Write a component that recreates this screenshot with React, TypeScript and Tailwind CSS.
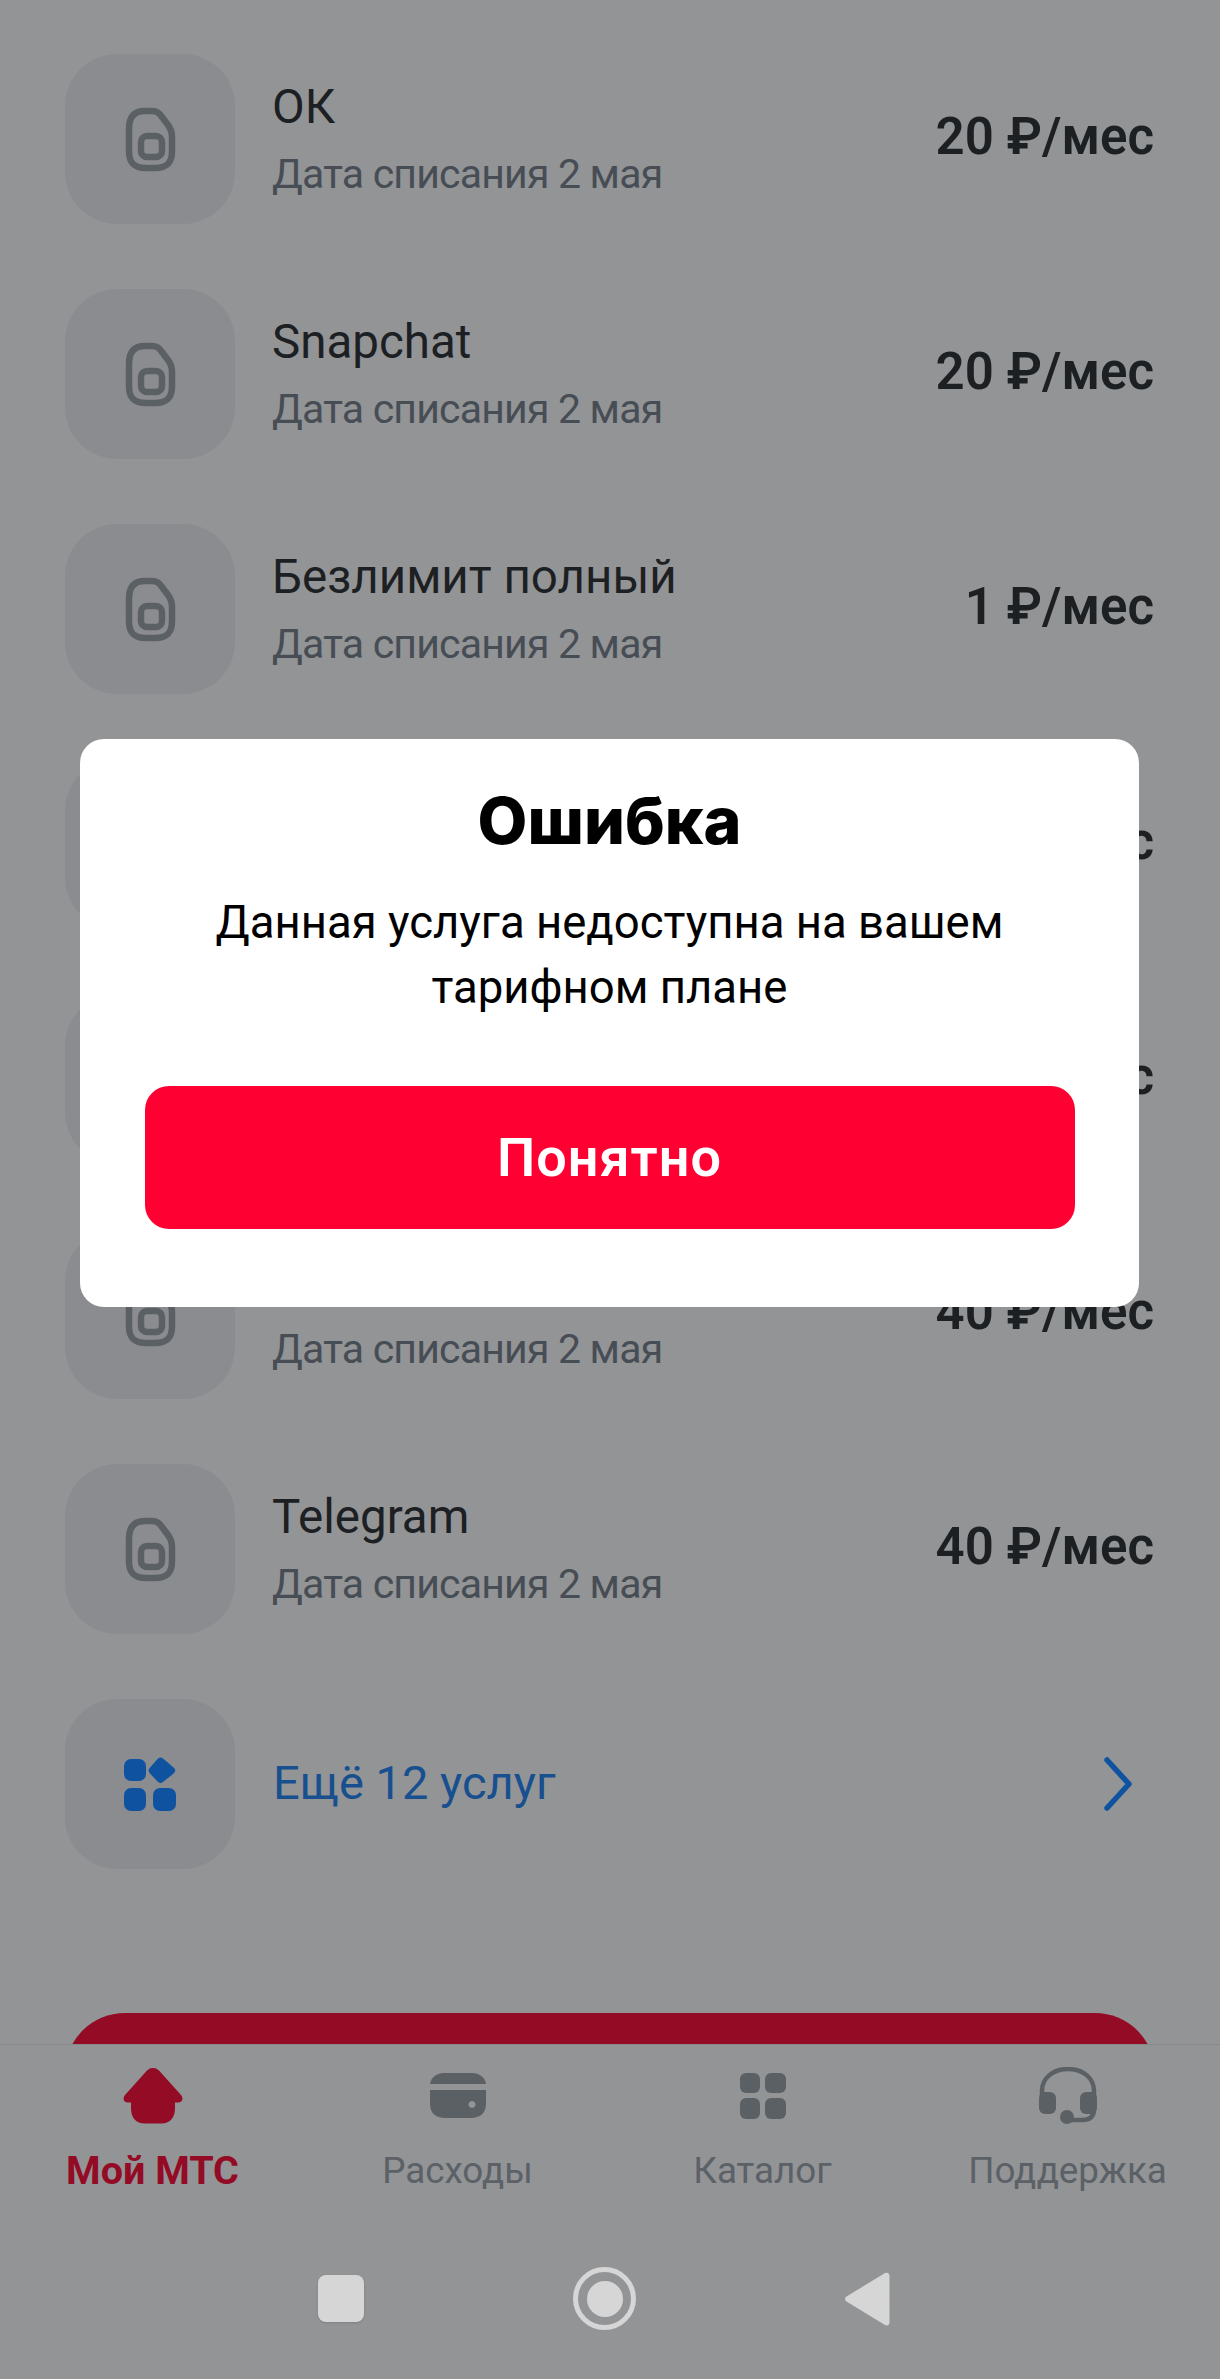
import React from "react";

const rows = [
  { name: "ОК", price: "20 ₽/мес", date: true },
  { name: "Snapchat", price: "20 ₽/мес", date: true },
  { name: "Безлимит полный", price: "1 ₽/мес", date: true },
  { name: "", price: "40 ₽/мес", date: false },
  { name: "", price: "40 ₽/мес", date: false },
  { name: "", price: "40 ₽/мес", date: true },
  { name: "Telegram", price: "40 ₽/мес", date: true },
];

function SimIcon() {
  return (
    <svg width="51" height="65" viewBox="0 0 51 65" fill="none" stroke="#5b6064" strokeWidth="6.5">
      <path d="M4 22C4 10 9 4 20 4H27C32 4 34 6 37 10L43 18C46 22 47 25 47 30V44C47 56 42 61 30 61H21C9 61 4 56 4 44Z" />
      <rect x="16" y="29" width="21" height="21" rx="6" />
    </svg>
  );
}

function Row({ name, price, date }: { name: string; price: string; date: boolean }) {
  return (
    <div className="flex h-[170px] items-center mb-[65px]">
      <div className="w-[170px] h-[170px] rounded-[52px] bg-[#8b8c90] flex items-center justify-center shrink-0">
        <SimIcon />
      </div>
      <div className="ml-[37px] flex-1 pt-[4px]">
        <div className="min-h-[63px] text-[47.5px] leading-[63px] text-[#1d2023]">{name}</div>
        <div className="mt-[4px] min-h-[63px] text-[41px] leading-[63px] tracking-[-0.8px] text-[#474d54]">
          {date ? "Дата списания 2 мая" : ""}
        </div>
      </div>
      <div className="mr-[1px] mb-[3px] text-[51px] font-semibold text-[#1d2023] whitespace-nowrap">{price}</div>
    </div>
  );
}

function NavItem({ label, active, icon }: { label: string; active?: boolean; icon: React.ReactNode }) {
  return (
    <div className="flex flex-col items-center">
      <div className="h-[96px] flex items-center justify-center">{icon}</div>
      <div className={active ? "mt-[2px] text-[39.5px] leading-[50px] font-bold text-[#930b24] whitespace-nowrap" : "mt-[2px] text-[36.8px] leading-[50px] text-[#5b6166] whitespace-nowrap"}>
        {label}
      </div>
    </div>
  );
}

export default function App() {
  return (
    <div className="relative w-[1220px] h-[2379px] overflow-hidden bg-[#939496] font-['Roboto',sans-serif]">
      <main className="h-[2044px] overflow-hidden pt-[54px] px-[65px]">
        {rows.map((r, i) => (
          <Row key={i} name={r.name} price={r.price} date={r.date} />
        ))}
        <div className="flex h-[170px] items-center">
          <div className="w-[170px] h-[170px] rounded-[52px] bg-[#8b8c90] flex items-center justify-center shrink-0">
            <svg width="54" height="54" viewBox="0 0 54 54" fill="#0f53a0">
              <rect x="1" y="2" width="22" height="22" rx="7" />
              <path d="M35 1.5C37 0 38 0 40 1.5L50 10C53 12.5 53 14.5 50 17L40 25C38 26.5 37 26.5 35 25L27.5 17C25 14.5 25 12.5 27.5 10Z" />
              <rect x="1" y="31" width="22" height="23" rx="7" />
              <rect x="30" y="31" width="23" height="23" rx="7" />
            </svg>
          </div>
          <div className="ml-[38px] mb-[2px] flex-1 text-[47px] text-[#174f8f]">Ещё 12 услуг</div>
          <svg className="mr-[22px]" width="30" height="54" viewBox="0 0 30 54" fill="none" stroke="#0f53a0" strokeWidth="5.5" strokeLinecap="round" strokeLinejoin="round">
            <path d="M4 3L26 27L4 51" />
          </svg>
        </div>
        <div className="mt-[144px] h-[120px] rounded-t-[60px] bg-[#930b24]" />
      </main>

      <footer className="border-t border-[#87888a]">
        <nav className="grid grid-cols-4 pt-[3px]">
          <NavItem
            label="Мой МТС"
            active
            icon={
              <svg width="60" height="56" viewBox="0 0 60 56" fill="#930b24">
                <path d="M24 2.5C27.5 -0.8 32.5 -0.8 36 2.5L58 27C61 31 59 34.5 55 34.5H52V40C52 50 47 55.5 38 55.5H22C13 55.5 8 50 8 40V34.5H5C1 34.5 -1 31 2 27Z" />
              </svg>
            }
          />
          <NavItem
            label="Расходы"
            icon={
              <svg width="56" height="46" viewBox="0 0 56 46" fill="#5b6064">
                <path d="M0 11C1 4 7 0 14 0H42C49 0 55 4 56 11Z" />
                <path fillRule="evenodd" d="M0 17H56V31C56 40 50 45 41 45H15C6 45 0 40 0 31ZM42 28a3.5 3.5 0 1 0 0.01 0Z" />
              </svg>
            }
          />
          <NavItem
            label="Каталог"
            icon={
              <svg width="46" height="46" viewBox="0 0 46 46" fill="#5b6064">
                <rect x="0" y="0" width="20" height="20" rx="6" />
                <rect x="25" y="0" width="21" height="20" rx="6" />
                <rect x="0" y="25" width="20" height="21" rx="6" />
                <rect x="25" y="25" width="21" height="21" rx="6" />
              </svg>
            }
          />
          <NavItem
            label="Поддержка"
            icon={
              <svg width="58" height="58" viewBox="0 0 58 58" fill="none">
                <path d="M3 29V24C3 11 14 2 29 2C44 2 55 11 55 24V42C55 50 50 53 43 53H30" stroke="#5b6064" strokeWidth="4.5" />
                <rect x="0" y="25" width="17" height="22" rx="6" fill="#5b6064" />
                <rect x="41" y="25" width="17" height="22" rx="6" fill="#5b6064" />
                <circle cx="28" cy="50" r="7" fill="#5b6064" />
              </svg>
            }
          />
        </nav>
        <div className="absolute bottom-[49px] left-0 right-0 pr-[12px] flex items-center justify-center gap-[209px]">
          <div className="w-[46px] h-[47px] rounded-[8px] bg-[#d6d6d6] shadow-sm" />
          <div className="w-[63px] h-[63px] rounded-full border-[5px] border-[#d6d6d6] flex items-center justify-center">
            <div className="w-[36px] h-[36px] rounded-full bg-[#d6d6d6]" />
          </div>
          <svg width="45" height="54" viewBox="0 0 45 54" fill="#d6d6d6">
            <path d="M1.5 24.5L40 1C42.5 0 44.5 1 44.5 4V50C44.5 53 42.5 54 40 53L1.5 29.5C-0.5 28 -0.5 26 1.5 24.5Z" />
          </svg>
        </div>
      </footer>

      <div className="absolute left-[80px] top-[739px] w-[1059px] h-[568px] rounded-[24px] bg-white flex flex-col items-center pt-[46px]">
        <div className="font-['Inter',sans-serif] text-[64.5px] leading-[72px] font-extrabold text-black">Ошибка</div>
        <div className="mt-[33px] text-[45.5px] leading-[65px] text-black text-center w-[860px]">
          Данная услуга недоступна на вашем тарифном плане
        </div>
        <button className="mt-[66px] w-[930px] h-[143px] rounded-[24px] bg-[#ff0032] text-white text-[54px] tracking-[1px] font-semibold">
          Понятно
        </button>
      </div>
    </div>
  );
}
